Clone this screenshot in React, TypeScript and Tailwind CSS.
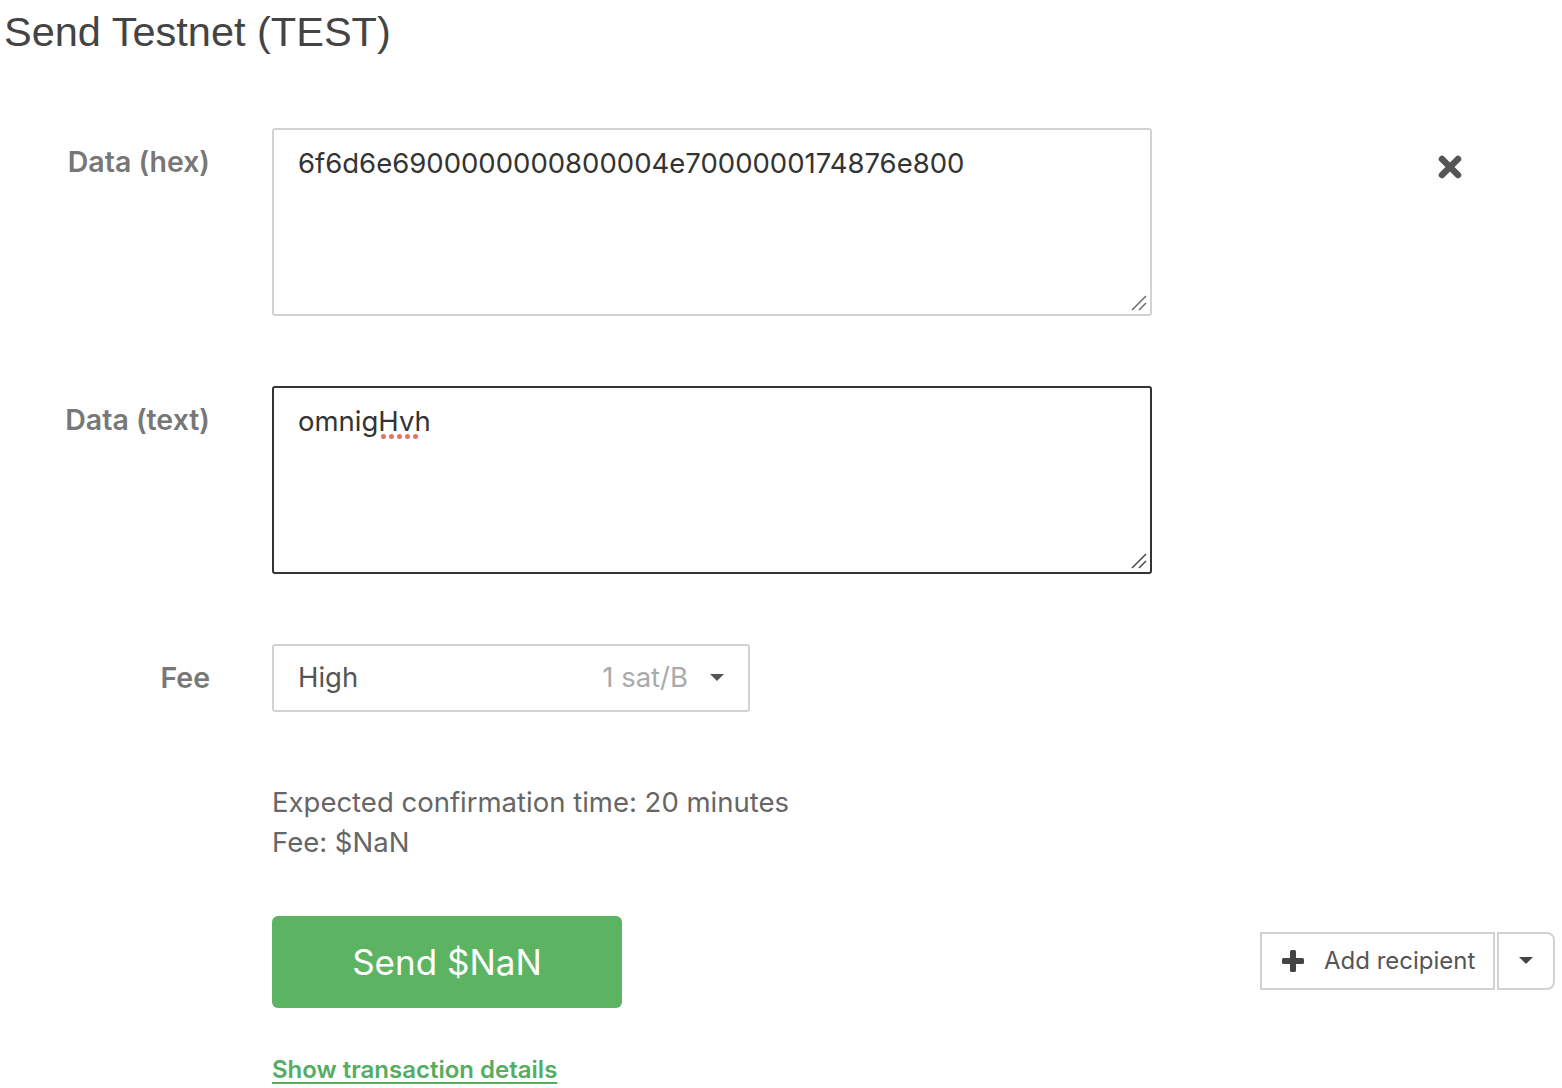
import React from "react";

const ResizeGrip = ({ color }: { color: string }) => (
  <svg
    className="absolute right-[3px] bottom-[3px]"
    width="16"
    height="16"
    viewBox="0 0 16 16"
  >
    <line x1="1" y1="15" x2="15" y2="1" stroke={color} strokeWidth="1.5" />
    <line x1="8" y1="15" x2="15" y2="8" stroke={color} strokeWidth="1.5" />
  </svg>
);

const App = () => {
  return (
    <div
      className="w-[1562px] h-[1088px] bg-white overflow-hidden text-[#333]"
      style={{ fontFamily: "Inter, 'Noto Sans', sans-serif" }}
    >
      <h1 className="pl-[4px] pt-[6px] text-[41.5px] leading-[52px] text-[#444] font-['Liberation_Sans',Arial,sans-serif]">
        Send Testnet (TEST)
      </h1>

      {/* data (hex) */}
      <div className="flex mt-[70px]">
        <div className="w-[210px] text-right pt-[14px] text-[28.5px] leading-[40px] font-semibold text-[#777]">
          Data (hex)
        </div>
        <div className="relative ml-[62px] w-[880px] h-[188px] border-2 border-[#d2d2d2] rounded-[3px] px-[24px] pt-[13px] text-[27.5px] leading-[40px] text-[#333]">
          6f6d6e6900000000800004e7000000174876e800
          <ResizeGrip color="#666" />
        </div>
        <div className="pl-[286px] pt-[27px]">
          <svg width="24" height="24" viewBox="0 0 24 24">
            <path
              d="M4 4 L20 20 M20 4 L4 20"
              stroke="#555"
              strokeWidth="6.5"
              strokeLinecap="round"
            />
          </svg>
        </div>
      </div>

      {/* data (text) */}
      <div className="flex mt-[70px]">
        <div className="w-[210px] text-right pt-[14px] text-[28.5px] leading-[40px] font-semibold text-[#777]">
          Data (text)
        </div>
        <div className="relative ml-[62px] w-[880px] h-[188px] border-2 border-[#333] rounded-[3px] px-[24px] pt-[13px] text-[27.5px] leading-[40px] text-[#333]">
          omnig
          <span className="relative">
            Hvh
            {/* spellcheck squiggle */}
            <span className="absolute left-[3px] top-[30px] flex gap-[3.5px]">
              {[0, 1, 2, 3, 4].map((i) => (
                <span
                  key={i}
                  className="block w-[4.5px] h-[4.5px] rounded-full bg-[#e4735f]"
                />
              ))}
            </span>
          </span>
          <ResizeGrip color="#444" />
        </div>
      </div>

      {/* fee */}
      <div className="flex items-center mt-[70px]">
        <div className="w-[210px] text-right text-[28.5px] leading-[40px] font-semibold text-[#777]">
          Fee
        </div>
        <div className="ml-[62px] w-[478px] h-[68px] border-2 border-[#d2d2d2] rounded-[3px] flex items-center pl-[24px] pr-[24px] text-[27.5px]">
          <span className="text-[#555]">High</span>
          <span className="ml-auto text-[#aaa]">1 sat/B</span>
          <svg className="ml-[22px]" width="14" height="8" viewBox="0 0 14 8">
            <path d="M0 0 L14 0 L7 7 Z" fill="#555" />
          </svg>
        </div>
      </div>

      {/* confirmation info */}
      <div className="ml-[272px] mt-[70px] text-[27.5px] leading-[40px] text-[#666]">
        <div>Expected confirmation time: 20 minutes</div>
        <div>Fee: $NaN</div>
      </div>

      {/* actions */}
      <div className="flex items-center mt-[54px] pl-[272px] pr-[7px]">
        <button className="w-[350px] h-[92px] rounded-[6px] bg-[#5cb462] text-white text-[35px]">
          Send $NaN
        </button>
        <div className="ml-auto flex items-center mb-[3px]">
          <button className="h-[58px] w-[235px] border-2 border-[#d2d2d2] flex items-center pl-[20px] text-[24px] text-[#555]">
            <svg width="22" height="22" viewBox="0 0 22 22">
              <rect x="8" y="0" width="6" height="22" rx="1.5" fill="#444" />
              <rect x="0" y="8" width="22" height="6" rx="1.5" fill="#444" />
            </svg>
            <span className="ml-[20px]">Add recipient</span>
          </button>
          <button className="ml-[2px] h-[58px] w-[58px] border-2 border-[#d2d2d2] rounded-r-[8px] flex items-center justify-center">
            <svg width="14" height="8" viewBox="0 0 14 8">
              <path d="M0 0 L14 0 L7 7 Z" fill="#444" />
            </svg>
          </button>
        </div>
      </div>

      <div className="ml-[272px] mt-[44px]">
        <a
          href="#"
          className="text-[24px] leading-[36px] font-semibold text-[#55ad62] underline underline-offset-[4px] decoration-2"
        >
          Show transaction details
        </a>
      </div>
    </div>
  );
};

export default App;
